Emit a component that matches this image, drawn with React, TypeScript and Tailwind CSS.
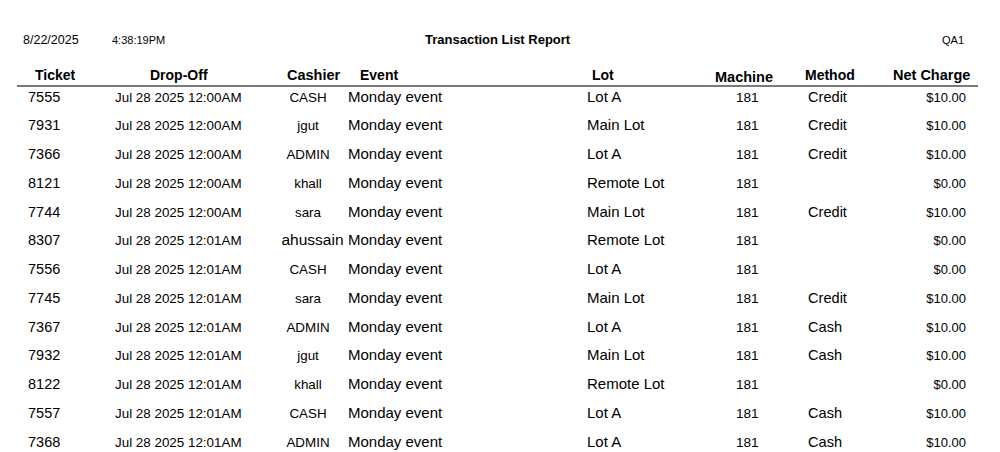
import React from "react";

type Row = {
  ticket: string;
  time: string;
  cashier: string;
  lot: string;
  method: string;
  net: string;
};

const rows: Row[] = [
  { ticket: "7555", time: "12:00AM", cashier: "CASH", lot: "Lot A", method: "Credit", net: "$10.00" },
  { ticket: "7931", time: "12:00AM", cashier: "jgut", lot: "Main Lot", method: "Credit", net: "$10.00" },
  { ticket: "7366", time: "12:00AM", cashier: "ADMIN", lot: "Lot A", method: "Credit", net: "$10.00" },
  { ticket: "8121", time: "12:00AM", cashier: "khall", lot: "Remote Lot", method: "", net: "$0.00" },
  { ticket: "7744", time: "12:00AM", cashier: "sara", lot: "Main Lot", method: "Credit", net: "$10.00" },
  { ticket: "8307", time: "12:01AM", cashier: "ahussain", lot: "Remote Lot", method: "", net: "$0.00" },
  { ticket: "7556", time: "12:01AM", cashier: "CASH", lot: "Lot A", method: "", net: "$0.00" },
  { ticket: "7745", time: "12:01AM", cashier: "sara", lot: "Main Lot", method: "Credit", net: "$10.00" },
  { ticket: "7367", time: "12:01AM", cashier: "ADMIN", lot: "Lot A", method: "Cash", net: "$10.00" },
  { ticket: "7932", time: "12:01AM", cashier: "jgut", lot: "Main Lot", method: "Cash", net: "$10.00" },
  { ticket: "8122", time: "12:01AM", cashier: "khall", lot: "Remote Lot", method: "", net: "$0.00" },
  { ticket: "7557", time: "12:01AM", cashier: "CASH", lot: "Lot A", method: "Cash", net: "$10.00" },
  { ticket: "7368", time: "12:01AM", cashier: "ADMIN", lot: "Lot A", method: "Cash", net: "$10.00" },
];

const cols = "grid grid-cols-[83px_170px_76px_214px_130px_100px_90px_98px]";

export default function App() {
  return (
    <div
      className="h-[452px] w-[1000px] overflow-hidden bg-white text-black"
      style={{ fontFamily: '"Liberation Sans", Arial, sans-serif' }}
    >
      <div className="pt-[32px] pl-[23px] pr-[36px] flex items-baseline h-[16px] leading-[16px] box-content">
        <span className="text-[12.5px] w-[89px]">8/22/2025</span>
        <span className="text-[11px] w-[59px]">4:38:19PM</span>
        <span className="ml-[254px] text-[13px] font-bold whitespace-nowrap">Transaction List Report</span>
        <span className="flex-1" />
        <span className="text-[11px]">QA1</span>
      </div>

      <div className="ml-[17px] w-[961px] mt-[19px]">
        <div className={`${cols} h-[18px] leading-[16px] text-[14px] font-bold items-start`}>
          <div className="pl-[18px]">Ticket</div>
          <div className="pl-[50px]">Drop-Off</div>
          <div className="pl-[17px] text-[14.5px]">Cashier</div>
          <div className="pl-[14px]">Event</div>
          <div className="pl-[32px]">Lot</div>
          <div className="pl-[25px] pt-[2px] text-[14.5px]">Machine</div>
          <div className="pl-[15px]">Method</div>
          <div className="pl-[13px] text-[14.5px]">Net Charge</div>
        </div>
        <div className="h-[2px] bg-[#7a7a7a]" />
        {rows.map((r) => (
          <div key={r.ticket} className={`${cols} h-[28.75px] items-baseline leading-[18px] pt-[0.5px]`}>
            <div className="pl-[11px] text-[14.5px]">{r.ticket}</div>
            <div className="pl-[15px] text-[13.4px]">Jul 28 2025 {r.time}</div>
            <div
              className={`text-center whitespace-nowrap ${
                r.cashier === "ahussain" ? "text-[15.5px] pl-[9px]" : "text-[13.4px]"
              }`}
            >
              {r.cashier}
            </div>
            <div className="pl-[2px] text-[15px]">Monday event</div>
            <div className="pl-[27px] text-[15px]">{r.lot}</div>
            <div className="pl-[46px] text-[13.6px]">181</div>
            <div className="pl-[18px] text-[14.6px]">{r.method}</div>
            <div className="pr-[12px] text-right text-[13px]">{r.net}</div>
          </div>
        ))}
      </div>
    </div>
  );
}
